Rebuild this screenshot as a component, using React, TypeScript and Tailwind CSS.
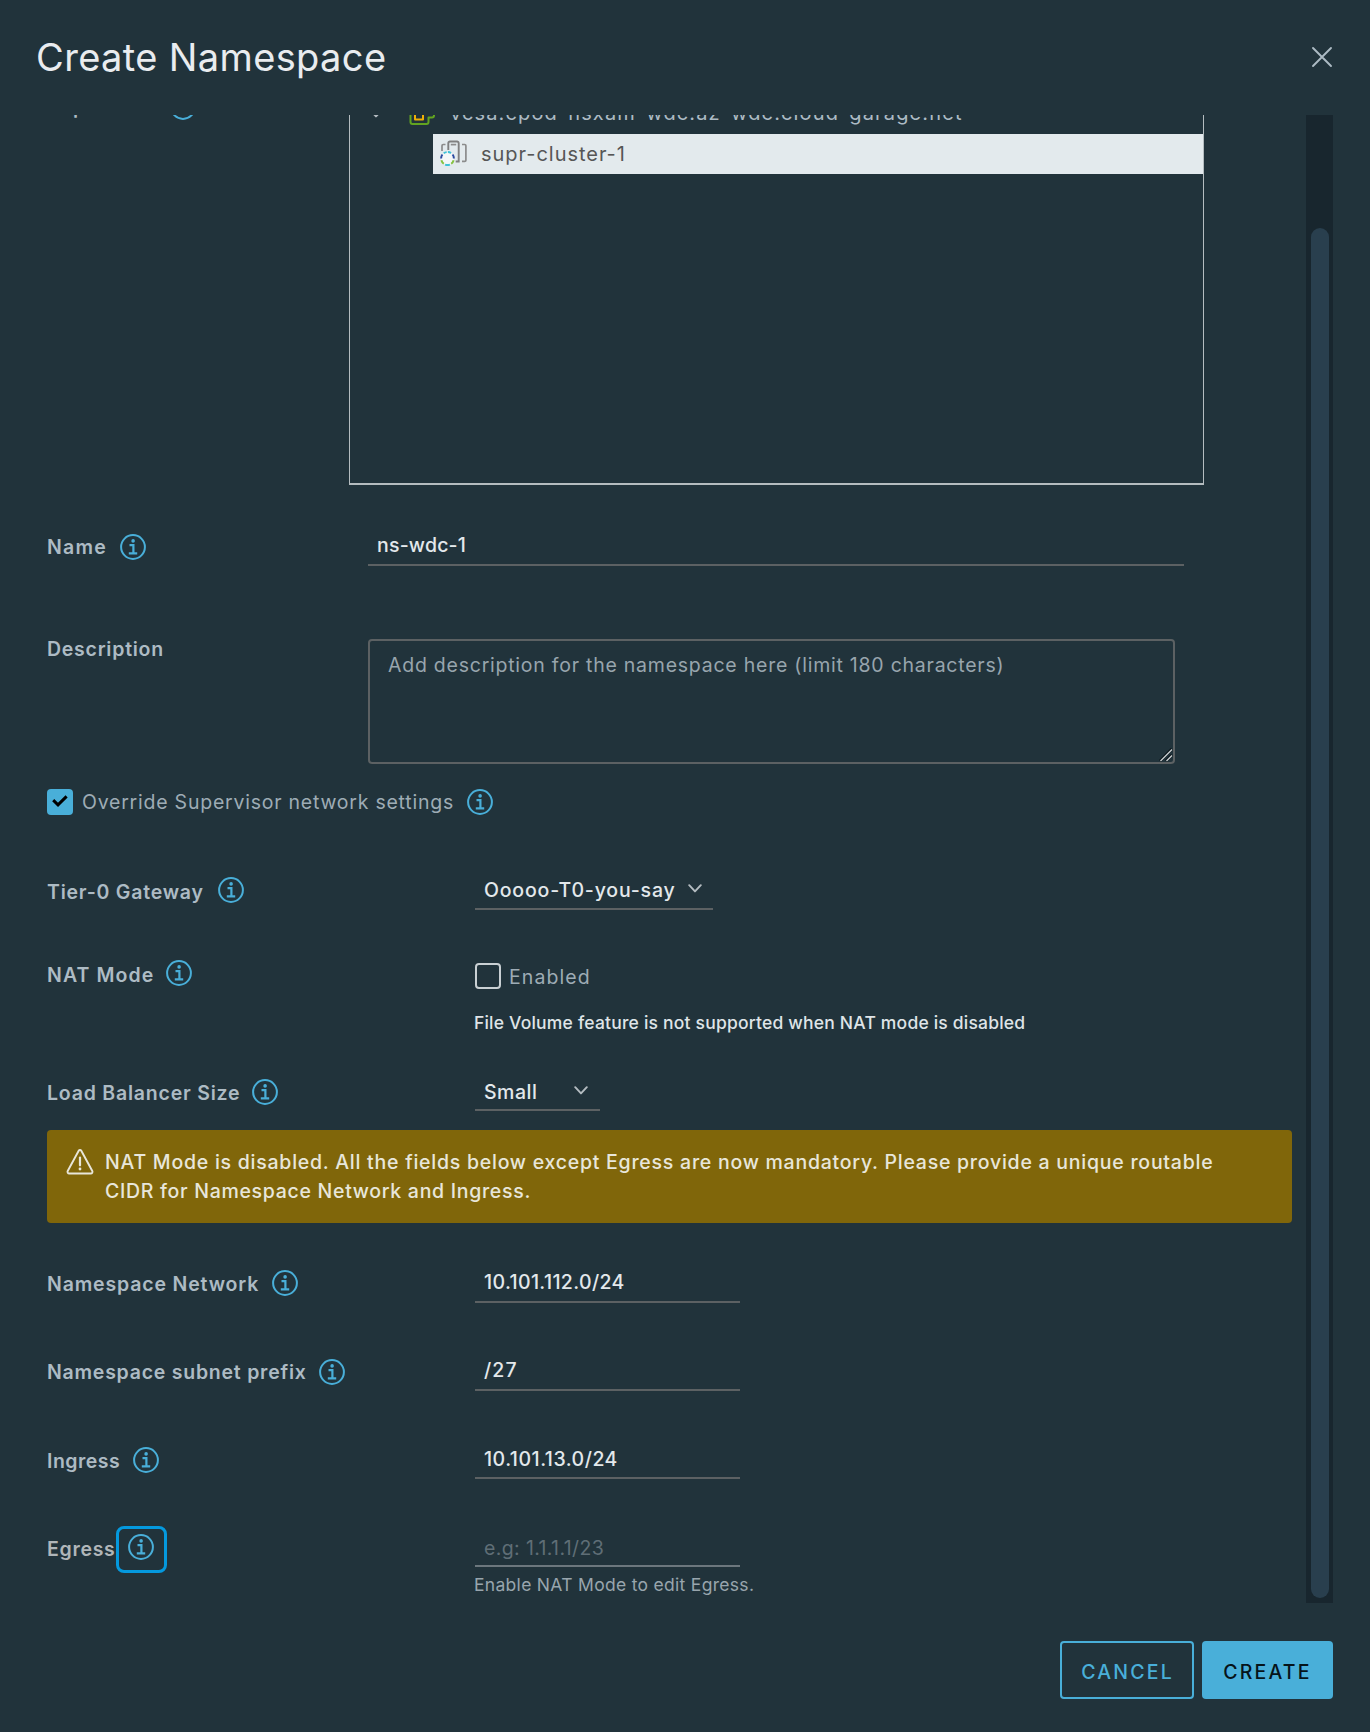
import type { ReactNode } from "react";

function InfoIcon({ className = "" }: { className?: string }) {
  return (
    <svg viewBox="0 0 26 26" className={`size-[26px] shrink-0 text-[#49afd9] ${className}`} fill="none" stroke="currentColor">
      <circle cx="13" cy="13" r="11.900" strokeWidth="2" />
      <circle cx="13.1" cy="6.9" r="1.800" fill="currentColor" stroke="none" />
      <path d="M9.500 11.100h3.900v8M8.800 19.300h8.400" strokeWidth="2.200" />
    </svg>
  );
}

function Chevron({ className = "" }: { className?: string }) {
  return (
    <svg viewBox="0 0 14 9" className={`h-[9px] w-[14px] shrink-0 text-[#b4bcc1] ${className}`} fill="none" stroke="currentColor" strokeWidth="1.900" strokeLinecap="round" strokeLinejoin="round">
      <path d="M1.2 1.2 7 7.4l5.8-6.2" />
    </svg>
  );
}

function VCenterIcon() {
  return (
    <svg viewBox="0 0 26 26" className="size-[26px] shrink-0" fill="none" strokeLinejoin="round">
      <path d="M9 8V3.5A2 2 0 0 1 11 1.500h12a2 2 0 0 1 2 2V16.500a2 2 0 0 1-2 2h-3.500V23a2 2 0 0 1-2 2h-14a2 2 0 0 1-2-2V10a2 2 0 0 1 2-2z" stroke="#62a420" strokeWidth="2" />
      <path d="M6 12h8v8.500H6z" stroke="#efb006" strokeWidth="2" />
    </svg>
  );
}

function ClusterIcon() {
  return (
    <svg viewBox="0 0 28 28" className="size-7 shrink-0" fill="none">
      <path d="M5.500 4.500H3.200a1.200 1.200 0 0 0-1.200 1.200V11" stroke="#8c8c8c" strokeWidth="1.700" />
      <path d="M8.300 10V3.200a1.700 1.700 0 0 1 1.700-1.700h7a1.700 1.700 0 0 1 1.700 1.700V21.500h-3" stroke="#808080" strokeWidth="1.900" />
      <path d="M10.800 4.600h5.400" stroke="#8c8c8c" strokeWidth="1.700" />
      <path d="M22 4.500h2.700a1.200 1.200 0 0 1 1.200 1.200v14.500a1.200 1.200 0 0 1-1.200 1.200H22" stroke="#8c8c8c" strokeWidth="1.700" />
      <circle cx="7.500" cy="18.500" r="6.600" fill="#fff" fillOpacity="0.6" />
      <g strokeWidth="2">
        <path d="M3.700 13.300a6.500 6.500 0 0 1 7.600 0" stroke="#3fc1d6" strokeDasharray="3.200 1.200" />
        <path d="M2.400 14.500A6.500 6.500 0 0 0 1.100 18.500M12.600 14.500A6.500 6.500 0 0 1 13.900 18.500" stroke="#2b4aa0" />
        <path d="M1.400 20.300a6.500 6.500 0 0 0 2.400 3.500M13.600 20.300a6.500 6.500 0 0 1-2.400 3.500" stroke="#85c241" />
        <path d="M5.100 24.600a6.500 6.500 0 0 0 4.800 0" stroke="#3fc1d6" />
      </g>
    </svg>
  );
}

function Label({ text, className = "", icon = "ml-3" }: { text: string; className?: string; icon?: string | null }) {
  return (
    <div className={`flex h-6 items-center font-semibold text-[#adbbc4] ${className}`}>
      <span className="whitespace-nowrap">{text}</span>
      {icon !== null && <InfoIcon className={icon} />}
    </div>
  );
}

function Row({ className, children }: { className: string; children: ReactNode }) {
  return <div className={`grid shrink-0 grid-cols-[428px_1fr] items-start ${className}`}>{children}</div>;
}

const fieldBase = "box-border border-b-2 border-[#5c6163] pl-[9px] leading-6 font-medium text-[#e3e8eb]";

export default function App() {
  return (
    <div className="flex h-[1732px] w-[1370px] flex-col overflow-hidden bg-[#21333b] font-['Inter',sans-serif] text-[19.5px] leading-6">
      <header className="flex h-[115px] shrink-0 items-start justify-between pr-[37px] pl-9">
        <h1 className="mt-8 text-[38px] leading-[50px] tracking-[0.37px] text-[#e9ecef]">Create Namespace</h1>
        <svg viewBox="0 0 22 22" className="mt-[46px] size-[22px] text-[#adbbc4]" fill="none" stroke="currentColor" strokeWidth="1.900" strokeLinecap="round">
          <path d="M2 2l18 18M20 2 2 20" />
        </svg>
      </header>

      <div className="flex h-[1488px] shrink-0 overflow-hidden">
        <div className="flex w-[1306px] shrink-0 flex-col pl-[47px]">
          {/* Supervisor tree, scrolled partly out of view */}
          <div className="-mt-[21px] flex h-[391px] shrink-0 items-start">
            <Label text="Supervisor" className="mt-px w-[302px] tracking-[0.7px]" icon="ml-[13px] -mt-px" />
            <div className="flex h-full w-[855px] flex-col border-x border-b-2 border-[#b4bcbf]">
              <div className="mb-[3px] flex h-[37px] shrink-0 items-center text-xl text-[#adbbc4]">
                <Chevron className="mt-[2px] ml-[19px]" />
                <span className="mt-[-2px] ml-[26px] flex h-7 items-start pt-px">
                  <VCenterIcon />
                </span>
                <span className="ml-[15px] tracking-[1.13px] whitespace-nowrap">vcsa.cpod-nsxam-wdc.az-wdc.cloud-garage.net</span>
              </div>
              <div className="ml-[83px] flex h-10 shrink-0 items-center bg-[#e3eaed] pl-[7px] text-xl text-[#565656]">
                <ClusterIcon />
                <span className="ml-[13px] tracking-[0.97px]">supr-cluster-1</span>
              </div>
            </div>
          </div>

          <div className="flex h-[154px] shrink-0 items-start">
            <Label text="Name" className="mt-[50px] w-[321px] tracking-[1.2px]" icon="ml-[13px]" />
            <div className={`${fieldBase} mt-[43px] h-[38px] w-[816px] pt-[5px] tracking-[0.2px]`}>ns-wdc-1</div>
          </div>

          <div className="flex h-[150px] shrink-0 items-start">
            <Label text="Description" className="-mt-[2px] w-[321px] tracking-[0.75px]" icon={null} />
            <div className="relative h-[125px] w-[807px] rounded-[4px] border-2 border-[#5c6163] pt-3 pl-[18px] tracking-[0.76px] text-[#98a5ad]">
              Add description for the namespace here (limit 180 characters)
              <svg viewBox="0 0 14 14" className="absolute right-0 bottom-0 size-[14px]" fill="none">
                <path d="M1 13 13 1M7 13l6-6" stroke="#0c161b" strokeWidth="3" />
                <path d="M1.500 13 13 1.500M7.500 13l5.500-5.500" stroke="#c6cccf" strokeWidth="1.400" />
              </svg>
            </div>
          </div>

          <div className="flex h-[87px] shrink-0 items-start">
            <div className="flex h-[26px] items-center text-[#9eacb5]">
              <span className="flex size-[26px] items-center justify-center rounded-[4px] bg-[#49afd9]">
                <svg viewBox="0 0 16 12" className="mt-[-2px] h-3 w-4" fill="none" stroke="#000" strokeWidth="3">
                  <path d="M1.200 5.200 6 9.800 14.600 1.400" />
                </svg>
              </span>
              <span className="ml-[9px] tracking-[0.77px]">Override Supervisor network settings</span>
              <InfoIcon className="ml-[13px]" />
            </div>
          </div>

          <Row className="h-[84px]">
            <Label text="Tier-0 Gateway" className="mt-1 tracking-[0.78px]" icon="ml-[14px] mt-[-4px]" />
            <div className={`${fieldBase} flex h-[34px] w-[238px] pt-[2px]`}>
              <span className="tracking-[0.82px]">Ooooo-T0-you-say</span>
              <Chevron className="mt-[6px] ml-[12px]" />
            </div>
          </Row>

          <Row className="h-[118px]">
            <Label text="NAT Mode" className="mt-[3px] tracking-[1.1px]" icon="ml-[12px] mt-[-4px]" />
            <div>
              <div className="mt-[3px] flex h-[26px] items-center text-[#9eacb5]">
                <span className="size-[26px] rounded-[4px] border-2 border-[#c9d0d3]" />
                <span className="ml-[8px] pt-px tracking-[1.1px]">Enabled</span>
              </div>
              <p className="mt-[22px] -ml-px text-[17.5px] font-medium tracking-[0.2px] whitespace-nowrap text-[#dfe4e7]">
                File Volume feature is not supported when NAT mode is disabled
              </p>
            </div>
          </Row>

          <Row className="h-[52px]">
            <Label text="Load Balancer Size" className="mt-[3px] tracking-[0.79px]" icon="ml-[12px] mt-[-3px]" />
            <div className={`${fieldBase} flex h-[33px] w-[125px] pt-[2px]`}>
              <span className="tracking-[0.5px]">Small</span>
              <Chevron className="mt-[6px] ml-[37px]" />
            </div>
          </Row>

          <div className="flex h-[93px] w-[1245px] shrink-0 items-start rounded-[4px] bg-[#80660a] pt-[18px] pl-[19px] text-[#e8e6da]">
            <svg viewBox="0 0 28 28" className="size-7 shrink-0" fill="none" stroke="currentColor" strokeWidth="1.900" strokeLinejoin="round">
              <path d="M12.700 2.800 1.700 23a1.700 1.700 0 0 0 1.500 2.500h21.600a1.700 1.700 0 0 0 1.500-2.500L15.300 2.800a1.500 1.500 0 0 0-2.600 0z" />
              <path d="M14 9.500v7.800" strokeWidth="2.200" strokeLinecap="round" />
              <circle cx="14" cy="21" r="1.400" fill="currentColor" stroke="none" />
            </svg>
            <p className="ml-[11px] leading-[28.800px] font-medium whitespace-nowrap">
              <span className="block tracking-[0.755px]">NAT Mode is disabled. All the fields below except Egress are now mandatory. Please provide a unique routable</span>
              <span className="block tracking-[0.7px]">CIDR for Namespace Network and Ingress.</span>
            </p>
          </div>

          <Row className="mt-9 h-[88px]">
            <Label text="Namespace Network" className="mt-[13px] tracking-[0.84px]" icon="ml-[13px] mt-[-3px]" />
            <div className={`${fieldBase} h-11 w-[265px] pt-[11px] tracking-[0.37px]`}>10.101.112.0/24</div>
          </Row>
          <Row className="h-[88px]">
            <Label text="Namespace subnet prefix" className="mt-[13px] tracking-[0.76px]" icon="ml-[12px] -mt-px" />
            <div className={`${fieldBase} h-11 w-[265px] pt-[11px] tracking-[1.1px]`}>/27</div>
          </Row>
          <Row className="h-[88px]">
            <Label text="Ingress" className="mt-[14px] tracking-[0.5px]" icon="ml-[13px] mt-[-3px]" />
            <div className={`${fieldBase} h-11 w-[265px] pt-3 tracking-[0.5px]`}>10.101.13.0/24</div>
          </Row>
          <Row className="h-[80px]">
            <div className="relative mt-[14px] flex h-6 items-center font-semibold tracking-[0.7px] text-[#b0b6b9]">
              <span>Egress</span>
              <span className="absolute top-[-11px] left-[69px] flex h-[47px] w-[51px] items-start justify-center rounded-[8px] border-3 border-[#0499de] pt-[5px]">
                <InfoIcon className="-ml-px" />
              </span>
            </div>
            <div>
              <div className="h-11 w-[265px] border-b-2 border-[#6c777d] pt-[13px] pl-[9px] tracking-[0.37px] text-[#5f6e76]">e.g: 1.1.1.1/23</div>
              <p className="mt-[6px] -ml-px text-[17.5px] tracking-[0.3px] text-[#98a5ad]">Enable NAT Mode to edit Egress.</p>
            </div>
          </Row>
        </div>

        <div className="h-full w-[27px] shrink-0 bg-[#18262e] px-[4.5px] pt-[113px] pb-[5px]">
          <div className="h-full rounded-full bg-[#293f4e]" />
        </div>
      </div>

      <footer className="flex shrink-0 items-start justify-end gap-2 pt-[38px] pr-[37px] font-medium">
        <button className="h-[58px] w-[134px] rounded-[4px] border-2 border-[#49afd9] pt-[3px] pl-px tracking-[2.2px] text-[#49afd9]">CANCEL</button>
        <button className="h-[58px] w-[131px] rounded-[4px] bg-[#49afd9] pt-[3px] tracking-[2.2px] text-[#06141a]">CREATE</button>
      </footer>
    </div>
  );
}
